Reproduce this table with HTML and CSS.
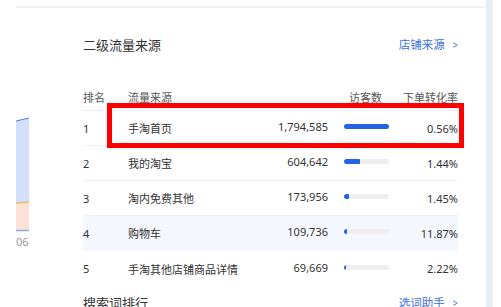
FILE: index.html
```html
<!DOCTYPE html>
<html lang="zh">
<head>
<meta charset="utf-8">
<link rel="stylesheet" href="styles.css">
</head>
<body>
<div class="page">
  <div class="main">
    <div class="inner">
      <div class="chart">
        <svg width="13" height="224" viewBox="0 0 13 224">
          <polygon points="0,113 13,110 13,194 0,194" fill="#d3dff8"/>
          <line x1="0" y1="113" x2="13" y2="110" stroke="#4f7fe6" stroke-width="1"/>
          <rect x="0" y="195" width="13" height="27" fill="#fde3d7"/>
          <line x1="0" y1="195" x2="13" y2="194" stroke="#f2b866" stroke-width="1.5"/>
          <line x1="0" y1="222.5" x2="13" y2="222.5" stroke="#8ea8dc" stroke-width="1.5"/>
        </svg>
        <div class="axis">06</div>
      </div>
      <div class="card">
        <div class="head">
          <span class="title">二级流量来源</span>
          <span class="link">店铺来源 <span class="chev">&gt;</span></span>
        </div>
        <div class="table">
          <div class="row th">
            <span>排名</span>
            <span>流量来源</span>
            <span class="th-uv">访客数</span>
            <span class="pct">下单转化率</span>
          </div>
          <div class="row">
            <span>1</span><span>手淘首页</span><span class="num">1,794,585</span>
            <span class="bar"><i style="width:45px"></i></span><span class="pct">0.56%</span>
          </div>
          <div class="row">
            <span>2</span><span>我的淘宝</span><span class="num">604,642</span>
            <span class="bar"><i style="width:16px"></i></span><span class="pct">1.44%</span>
          </div>
          <div class="row">
            <span>3</span><span>淘内免费其他</span><span class="num">173,956</span>
            <span class="bar"><i style="width:5px"></i></span><span class="pct">1.45%</span>
          </div>
          <div class="row hover">
            <span>4</span><span>购物车</span><span class="num">109,736</span>
            <span class="bar"><i style="width:3px"></i></span><span class="pct">11.87%</span>
          </div>
          <div class="row last">
            <span>5</span><span>手淘其他店铺商品详情</span><span class="num">69,669</span>
            <span class="bar"><i style="width:2px"></i></span><span class="pct">2.22%</span>
          </div>
        </div>
        <div class="head next">
          <span class="title">搜索词排行</span>
          <span class="link">选词助手 <span class="chev">&gt;</span></span>
        </div>
      </div>
    </div>
  </div>
  <div class="scroll"></div>
</div>
<div class="highlight"></div>
</body>
</html>
```

FILE: styles.css
```css
* { box-sizing: border-box; }
html, body { margin: 0; padding: 0; background: #fff; }
body {
  width: 501px;
  height: 307px;
  overflow: hidden;
  position: relative;
  font-family: "Noto Sans", "Noto Sans CJK SC", sans-serif;
  color: #333;
}
.page { display: flex; height: 307px; }
.main { width: 470px; margin-left: 16px; padding-top: 6px; }
.inner { border-top: 2px solid #f0f0f0; display: flex; }
.chart { width: 13px; flex: none; }
.chart svg { display: block; }
.axis {
  margin-top: 3px;
  font-size: 11px;
  line-height: 14px;
  color: #999;
  white-space: nowrap;
}
.card { flex: 1; padding: 26px 28px 0 54px; }
.head {
  display: flex;
  justify-content: space-between;
  align-items: center;
  height: 20px;
}
.title { font-size: 13px; color: #333; }
.link { font-size: 11.5px; color: #3c6fe0; }
.chev { display: inline-block; margin-left: 4px; font-size: 11px; transform: scaleX(0.8); }
.table { margin-top: 30px; }
.row {
  display: grid;
  grid-template-columns: 45px 120px 80px 16px 45px 69px;
  align-items: center;
  height: 35px;
  border-bottom: 1px solid #f0f0f0;
  font-size: 11px;
  color: #333;
  white-space: nowrap;
}
.row.th { height: 27px; color: #555; }
.row.hover { background: #f4f7fd; border-bottom-color: #f4f7fd; }
.row.last { border-bottom: none; }
.th-uv { grid-column: 3 / 6; text-align: right; padding-right: 7px; }
.num { text-align: right; margin-bottom: 3px; }
.bar {
  grid-column: 5;
  height: 5px;
  border-radius: 3px;
  background: #eeeeee;
  overflow: hidden;
  margin-bottom: 3px;
}
.bar i { display: block; height: 5px; background: #2463e6; border-radius: 1px; }
.pct { text-align: right; grid-column: 6; }
.next { margin-top: 6px; }
.scroll { width: 7px; flex: none; background: #e9ecf2; }
.highlight {
  position: absolute;
  left: 107px;
  top: 103px;
  width: 357px;
  height: 45px;
  border: 5px solid #ff0000;
}
```
